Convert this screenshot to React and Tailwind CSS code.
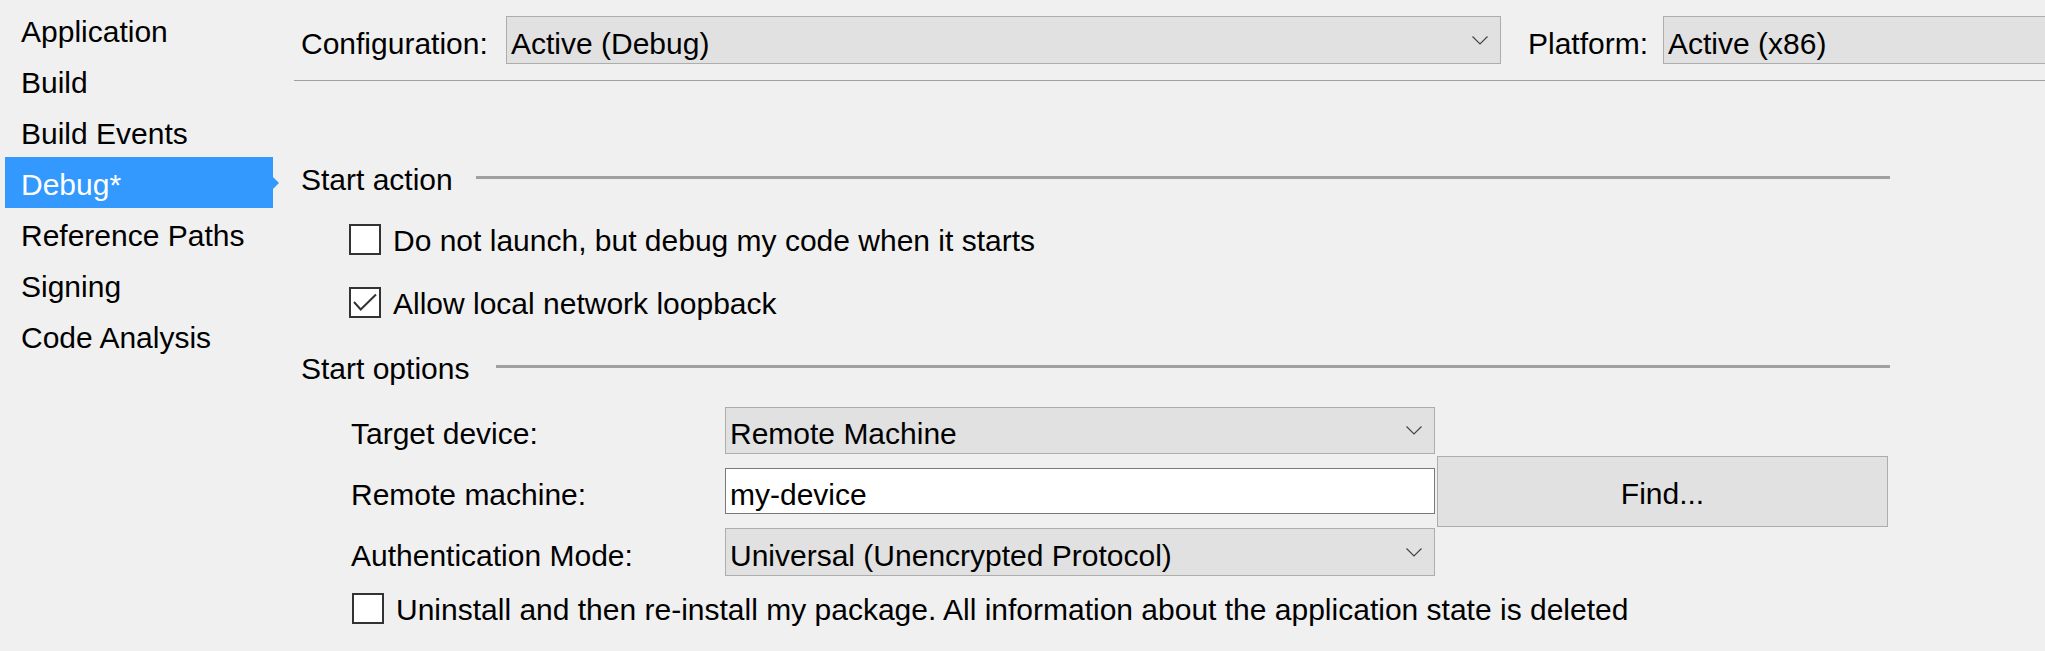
import React from "react";

const NAV = ["Application", "Build", "Build Events", "Debug*", "Reference Paths", "Signing", "Code Analysis"];

function Chevron() {
  return (
    <svg width="16" height="9" viewBox="0 0 16 9" className="shrink-0">
      <polyline points="0.5,0.5 8,8 15.5,0.5" fill="none" stroke="#444" strokeWidth="1.2" />
    </svg>
  );
}

function Dropdown({ value, className = "", chevron = true }) {
  return (
    <div className={`flex items-center justify-between border border-[#adadad] bg-[#e1e1e1] pl-[4px] pr-[12px] ${className}`}>
      <span className="translate-y-[3px] whitespace-nowrap">{value}</span>
      {chevron && <Chevron />}
    </div>
  );
}

function Checkbox({ checked, label, className = "" }) {
  return (
    <div className={`flex h-[40px] items-center ${className}`}>
      <div className="flex h-[31px] w-[32px] shrink-0 items-center justify-center border-2 border-[#333] bg-white">
        {checked && (
          <svg width="28" height="27" viewBox="0 0 28 27">
            <polyline points="3,13 9.7,20.5 25,5.5" fill="none" stroke="#333" strokeWidth="2" />
          </svg>
        )}
      </div>
      <span className="ml-[12px] translate-y-[1px] whitespace-nowrap">{label}</span>
    </div>
  );
}

function SectionHeader({ title, gap }) {
  return (
    <div className="flex h-[40px] items-center">
      <span className="whitespace-nowrap">{title}</span>
      <div className={`h-[3px] flex-1 -translate-y-[2px] bg-[#a0a0a0] ${gap}`} />
    </div>
  );
}

export default function App() {
  return (
    <div className="flex h-[651px] w-[2045px] overflow-hidden bg-[#f0f0f0] font-['Liberation_Sans',Arial,sans-serif] text-[30px] text-black">
      {/* side navigation */}
      <div className="w-[294px] shrink-0 pl-[5px] pt-[4px]">
        {NAV.map((item) => {
          const active = item === "Debug*";
          return (
            <div
              key={item}
              className={`relative flex h-[51px] w-[268px] items-center pl-[16px] ${active ? "bg-[#3399ff] text-white" : ""}`}
            >
              <span className="translate-y-[2px]">{item}</span>
              {active && (
                <div className="absolute left-full top-1/2 h-0 w-0 -translate-y-1/2 border-y-[6px] border-l-[6px] border-y-transparent border-l-[#3399ff]" />
              )}
            </div>
          );
        })}
      </div>

      {/* main page */}
      <div className="flex min-w-0 flex-1 flex-col">
        <div className="pt-[16px]">
          <div className="flex h-[48px] items-center pl-[7px]">
            <span className="w-[205px] shrink-0 translate-y-[3px] whitespace-nowrap">Configuration:</span>
            <Dropdown value="Active (Debug)" className="h-full w-[995px] shrink-0" />
            <span className="ml-[27px] w-[135px] shrink-0 translate-y-[3px] whitespace-nowrap">Platform:</span>
            <Dropdown value="Active (x86)" chevron={false} className="h-full w-[500px] shrink-0" />
          </div>
          <div className="mt-[16px] h-px bg-[#a0a0a0]" />
        </div>

        <div className="ml-[7px] w-[1589px]">
          <div className="mt-[78px]">
            <SectionHeader title="Start action" gap="ml-[23px]" />
          </div>
          <Checkbox className="mt-[20px] pl-[48px]" label="Do not launch, but debug my code when it starts" />
          <Checkbox checked className="mt-[23px] pl-[48px]" label="Allow local network loopback" />

          <div className="mt-[26px]">
            <SectionHeader title="Start options" gap="ml-[27px]" />
          </div>

          <div className="mt-[19px] grid grid-cols-[374px_710px_453px] grid-rows-[47px_46px_48px] gap-y-[14px] pl-[50px]">
            <div className="flex translate-y-[3px] items-center">Target device:</div>
            <Dropdown value="Remote Machine" className="h-full" />
            <div className="col-start-3 row-span-3 row-start-1 ml-[2px] mt-[49px] flex h-[71px] w-[451px] items-center justify-center border border-[#adadad] bg-[#e1e1e1]">
              <span className="translate-y-[2px]">Find...</span>
            </div>

            <div className="col-start-1 row-start-2 flex translate-y-[3px] items-center">Remote machine:</div>
            <div className="col-start-2 row-start-2 flex items-center border border-[#7a7a7a] bg-white pl-[4px]">
              <span className="translate-y-[3px]">my-device</span>
            </div>

            <div className="col-start-1 row-start-3 flex translate-y-[3px] items-center">Authentication Mode:</div>
            <Dropdown value="Universal (Unencrypted Protocol)" className="col-start-2 row-start-3 h-full" />
          </div>

          <Checkbox
            className="mt-[12px] pl-[51px]"
            label="Uninstall and then re-install my package. All information about the application state is deleted"
          />
        </div>
      </div>
    </div>
  );
}
